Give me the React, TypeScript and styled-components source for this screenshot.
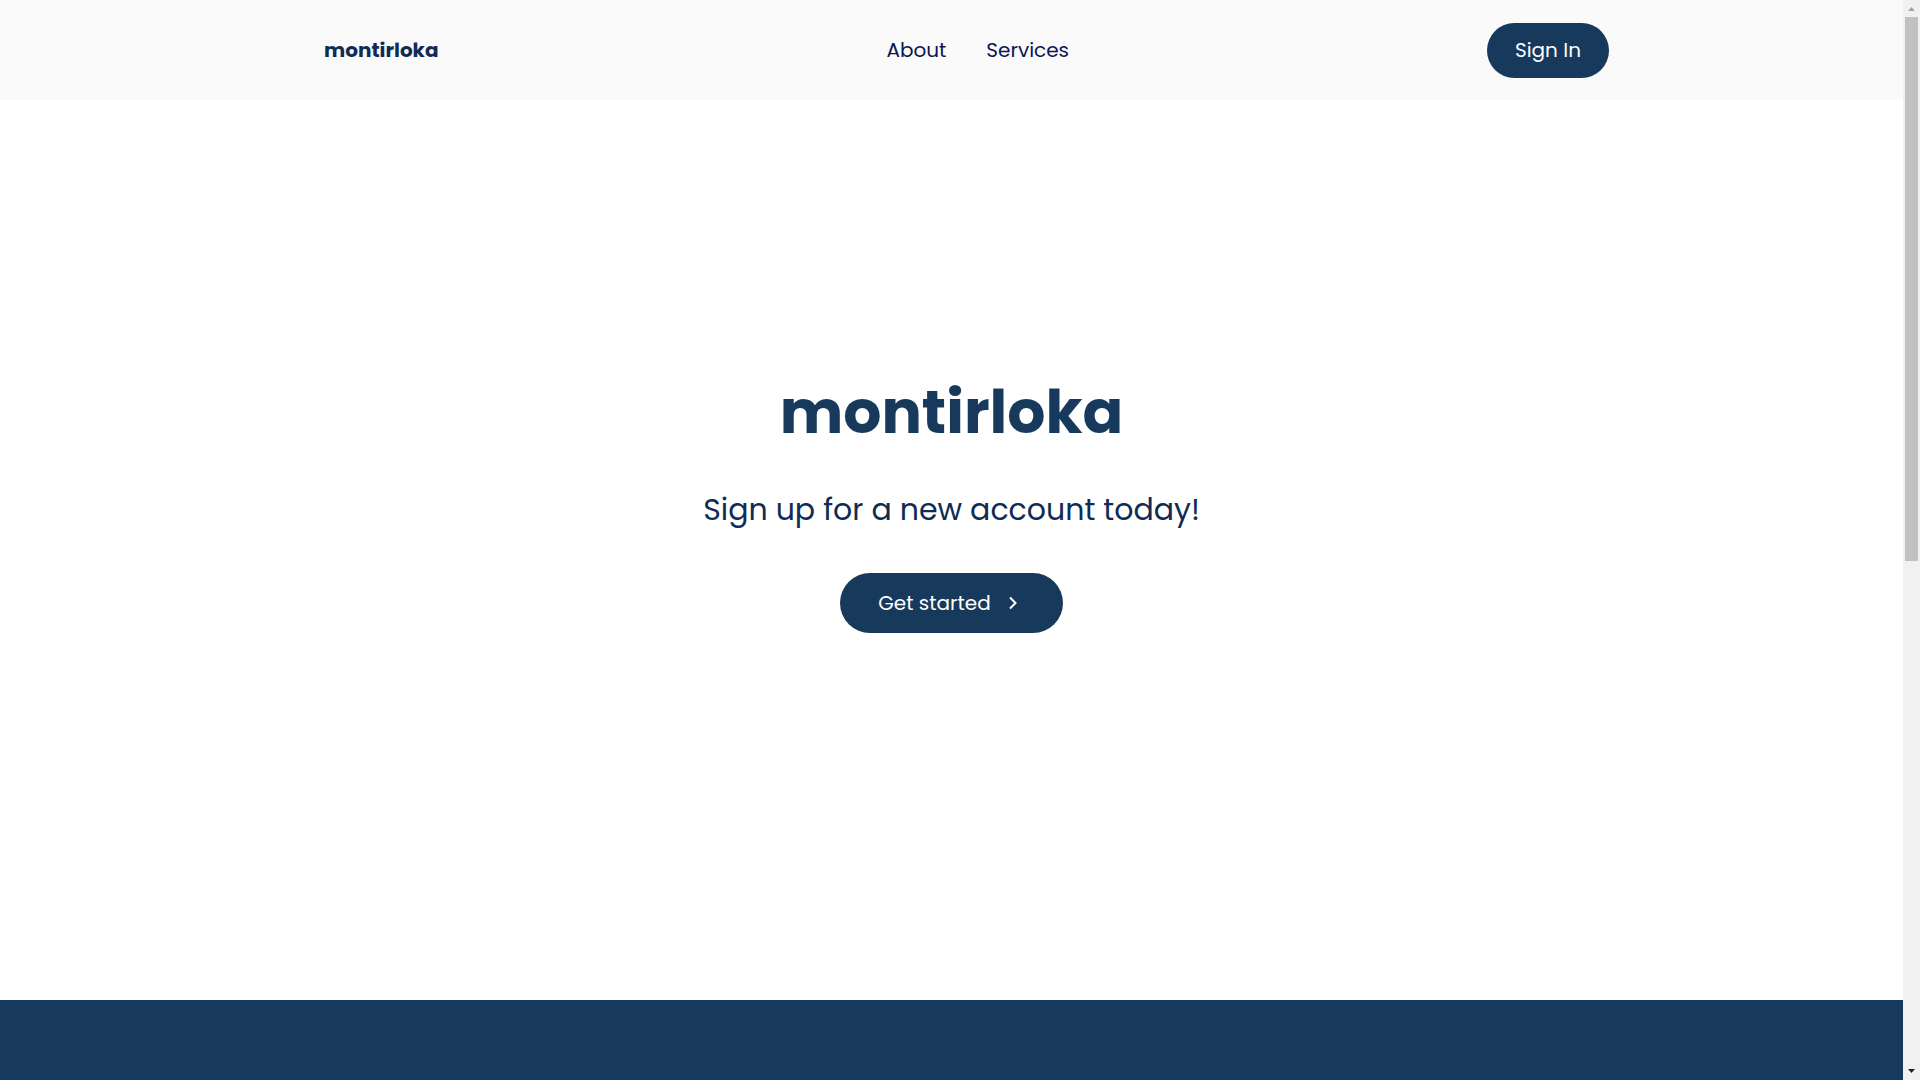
import React from "react";
import styled, { createGlobalStyle } from "styled-components";

const navy = "#17395c";
const ink = "#0b1650";

const GlobalStyle = createGlobalStyle`
  * { box-sizing: border-box; }
  body {
    margin: 0;
    background: #fff;
    color: ${ink};
    font-family: Poppins, Inter, "Open Sans", sans-serif;
  }
  h1, p { margin: 0; }
  a { color: inherit; text-decoration: none; }
`;

const Shell = styled.div`
  display: grid;
  grid-template-columns: minmax(0, 1fr) 17px;
  min-height: 100vh;
`;

const Page = styled.div`
  display: flex;
  flex-direction: column;
`;

const Header = styled.header`
  display: flex;
  justify-content: center;
  padding: 0 24px;
  background: #fafafa;
`;

const Nav = styled.nav`
  display: flex;
  flex: 0 1 1315px;
  align-items: center;
  justify-content: space-between;
  height: 100px;
`;

const Brand = styled.a`
  padding: 0 30px;
  color: #102c54;
  font-size: 20px;
  font-weight: 700;
`;

const Menu = styled.div`
  display: flex;
`;

const MenuLink = styled.a`
  padding: 0 20px;
  font-size: 20px;
  font-weight: 400;
`;

const Pill = styled.button<{ $large?: boolean }>`
  display: inline-flex;
  align-items: center;
  justify-content: center;
  gap: 12px;
  height: ${(p) => (p.$large ? 60 : 55)}px;
  padding: 0 ${(p) => (p.$large ? 38 : 28)}px;
  border: 0;
  border-radius: 30px;
  background: ${navy};
  color: #fff;
  font-family: inherit;
  font-size: 20px;
  font-weight: 400;
  cursor: pointer;
`;

const Hero = styled.main`
  display: flex;
  flex: 1;
  flex-direction: column;
  align-items: center;
  justify-content: center;
  padding-bottom: 100px;
  text-align: center;
`;

const Title = styled.h1`
  color: ${navy};
  font-size: 60px;
  font-weight: 700;
  line-height: 90px;
`;

const Lead = styled.p`
  margin: 28px 0 38px;
  color: #102c54;
  font-size: 30px;
  font-weight: 400;
  line-height: 50px;
`;

const Band = styled.section`
  height: 80px;
  background: ${navy};
`;

const Track = styled.div`
  display: flex;
  flex-direction: column;
  align-items: center;
  background: #f1f1f1;
`;

const Arrow = styled.svg`
  display: block;
  width: 17px;
  height: 17px;
`;

const Thumb = styled.div`
  flex: 0 1 544px;
  width: 13px;
  background: #c1c1c1;
`;

const Spacer = styled.div`
  flex: 1;
`;

export default function App() {
  return (
    <>
      <GlobalStyle />
      <Shell>
        <Page>
          <Header>
            <Nav>
              <Brand href="#home">montirloka</Brand>
              <Menu>
                <MenuLink href="#about">About</MenuLink>
                <MenuLink href="#services">Services</MenuLink>
              </Menu>
              <Pill type="button">Sign In</Pill>
            </Nav>
          </Header>
          <Hero>
            <Title>montirloka</Title>
            <Lead>Sign up for a new account today!</Lead>
            <Pill type="button" $large>
              Get started
              <svg width="22" height="20" viewBox="0 0 22 20" fill="none" stroke="#fff" strokeWidth="2" aria-hidden="true">
                <path d="M7 4.500l5.500 5.500L7 15.500" />
              </svg>
            </Pill>
          </Hero>
          <Band id="about" />
        </Page>
        <Track aria-hidden="true">
          <Arrow viewBox="0 0 17 17">
            <path d="M5 11L8.500 7L12 11Z" fill="#a3a3a3" />
          </Arrow>
          <Thumb />
          <Spacer />
          <Arrow viewBox="0 0 17 17">
            <path d="M5 6L8.500 10L12 6Z" fill="#202020" />
          </Arrow>
        </Track>
      </Shell>
    </>
  );
}
